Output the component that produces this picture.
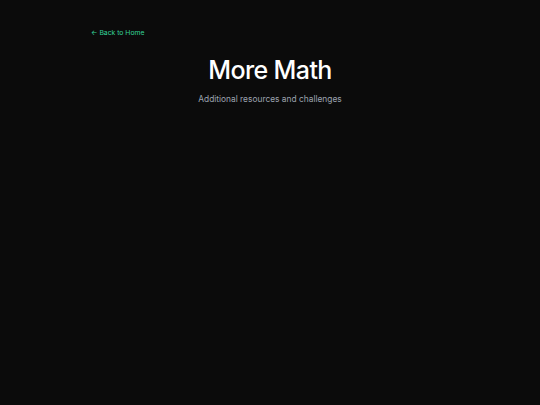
export default function App() {
  return (
    <div
      className="min-h-[405px] w-full bg-[#0b0b0b] text-white"
      style={{ fontFamily: 'Inter, "Liberation Sans", sans-serif' }}
    >
      <div className="px-[91px] pt-[28px]">
        {/* Back link */}
        <a href="#" className="block text-[6.8px] leading-[10px] text-[#34d399]">
          ← Back to Home
        </a>

        {/* Header */}
        <div className="mt-[17px] text-center">
          <h1 className="text-[25px] font-medium leading-[30px] tracking-tight">More Math</h1>
          <p className="mt-[8px] text-[8.4px] leading-[12px] text-[#9ca3af]">
            Additional resources and challenges
          </p>
        </div>
      </div>
    </div>
  );
}
